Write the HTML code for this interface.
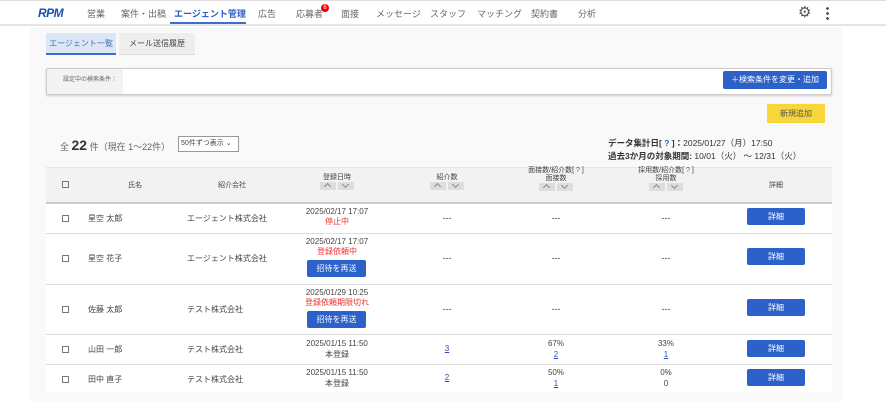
<!DOCTYPE html>
<html><head><meta charset="utf-8"><style>
*{margin:0;padding:0;box-sizing:border-box}
body{width:886px;height:402px;overflow:hidden;background:#fff;font-family:"Liberation Sans","Noto Sans CJK JP",sans-serif;color:#444;font-size:9px;position:relative;white-space:nowrap}
.a{position:absolute}
.nav{left:0;top:0;width:886px;height:26px;border-top:1px solid #ddd;border-bottom:2px solid #e4e4e4;background:#fff}
.ni{top:7px;font-size:9px;color:#666}
.wrap{left:30px;top:27px;width:812px;height:375px;background:#f9f9f9}
.btn{background:#2b61c9;color:#fff;text-align:center;border-radius:2px;font-size:8px}
.c{text-align:center}
.row{left:46px;width:786px;background:#fff;border-bottom:1px solid #ddd}
.cb{width:7px;height:7px;border:1px solid #777}
.sort{display:inline-block;width:16px;height:8px;background:#ddd;margin:0 1px;position:relative}
.sort::after{content:"";position:absolute;left:5px;top:2px;width:4px;height:4px;border-left:1px solid #888;border-top:1px solid #888;transform:rotate(45deg)}
.sort.d::after{top:0px;transform:rotate(225deg)}
.red{color:#e33}
.lk{color:#2b4fb0;text-decoration:underline}
</style></head><body>
<div class="a nav"></div>
<div class="a" style="left:38px;top:6px;font-weight:bold;font-style:italic;color:#1e4fb0;font-size:12px;letter-spacing:-0.5px">RPM</div>
<div class="a ni" style="left:87px">営業</div>
<div class="a ni" style="left:121px">案件・出稿</div>
<div class="a ni" style="left:174px;color:#2b5fc7;font-weight:bold">エージェント管理</div>
<div class="a" style="left:170px;top:22px;width:76px;height:2px;background:#3a6fd0"></div>
<div class="a ni" style="left:258px">広告</div>
<div class="a ni" style="left:296px">応募者</div>
<div class="a" style="left:321px;top:4px;width:8px;height:8px;border-radius:50%;background:#e00;color:#fff;font-size:6px;text-align:center;line-height:8px">6</div>
<div class="a ni" style="left:341px">面接</div>
<div class="a ni" style="left:376px">メッセージ</div>
<div class="a ni" style="left:430px">スタッフ</div>
<div class="a ni" style="left:477px">マッチング</div>
<div class="a ni" style="left:531px">契約書</div>
<div class="a ni" style="left:578px">分析</div>
<div class="a" style="left:798px;top:5px;font-size:15px;color:#555;line-height:15px;font-family:'DejaVu Sans',sans-serif">⚙</div>
<div class="a" style="left:826px;top:6px;width:3px;height:15px;background:radial-gradient(circle,#555 1.3px,transparent 1.5px) 0 0/3px 5px"></div>
<div class="a wrap"></div>
<div class="a" style="left:46px;top:33px;width:70px;height:22px;background:#dbe7f6;border-bottom:2px solid #3a6fd0;color:#4a6fb0;text-align:center;line-height:21px;font-size:8px">エージェント一覧</div>
<div class="a" style="left:119px;top:33px;width:76px;height:22px;background:#eee;border-bottom:1px solid #ddd;text-align:center;line-height:21px;color:#444;font-size:8px">メール送信履歴</div>
<div class="a" style="left:46px;top:68px;width:786px;height:27px;background:#fff;border:1px solid #ccc;border-radius:2px;box-shadow:0 1px 2px #ccc"></div>
<div class="a" style="left:47px;top:69px;width:76px;height:25px;background:#f3f3f3;font-size:6px;text-align:right;padding-right:6px;line-height:23px;color:#666">設定中の検索条件：</div>
<div class="a btn" style="left:723px;top:71px;width:104px;height:18px;line-height:18px">＋検索条件を変更・追加</div>
<div class="a" style="left:767px;top:104px;width:58px;height:19px;background:#f7d63a;text-align:center;line-height:19px;font-size:8px;color:#555">新規追加</div>
<div class="a" style="left:60px;top:137px;font-size:9px;color:#666">全 <b style="font-size:14px;color:#333">22</b> 件（現在 1～22件）</div>
<div class="a" style="left:178px;top:136px;width:61px;height:16px;border:1px solid #999;background:#fff;font-size:7px;line-height:14px;padding-left:2px">50件ずつ表示 ⌄</div>
<div class="a" style="left:608px;top:137px;font-size:8.5px;color:#333"><b>データ集計日[<span style="color:#2b5fc7"> ? </span>]：</b>2025/01/27（月）17:50</div>
<div class="a" style="left:608px;top:150px;font-size:8.5px;color:#333"><b>過去3か月の対象期間:</b> 10/01（火） ～ 12/31（火）</div>
<div class="a" style="left:46px;top:167px;width:786px;height:37px;background:#f2f2f2;border-bottom:2px solid #ccc;border-top:1px solid #e6e6e6"></div>
<div class="a cb" style="left:62px;top:181px"></div>
<div class="a c" style="left:110px;top:180px;width:50px;font-size:7px">氏名</div>
<div class="a c" style="left:200px;top:180px;width:64px;font-size:7px">紹介会社</div>
<div class="a c" style="left:297px;top:172px;width:80px;font-size:7px">登録日時<br><span class="sort"></span><span class="sort d"></span></div>
<div class="a c" style="left:407px;top:172px;width:80px;font-size:7px">紹介数<br><span class="sort"></span><span class="sort d"></span></div>
<div class="a c" style="left:506px;top:167px;width:100px;font-size:7px;line-height:8px">面接数/紹介数[<span style="color:#2b5fc7"> ? </span>]<br>面接数<br><span class="sort"></span><span class="sort d"></span></div>
<div class="a c" style="left:616px;top:167px;width:100px;font-size:7px;line-height:8px">採用数/紹介数[<span style="color:#2b5fc7"> ? </span>]<br>採用数<br><span class="sort"></span><span class="sort d"></span></div>
<div class="a c" style="left:756px;top:180px;width:40px;font-size:7px">詳細</div>

<div class="a row" style="top:204px;height:30px"></div>
<div class="a row" style="top:234px;height:51px"></div>
<div class="a row" style="top:285px;height:50px"></div>
<div class="a row" style="top:335px;height:30px"></div>
<div class="a row" style="top:365px;height:27px;border-bottom:none"></div>

<div class="a cb" style="left:62px;top:215px"></div><div class="a" style="left:88px;top:213px;font-size:8px">星空 太郎</div><div class="a" style="left:187px;top:213px;font-size:8px">エージェント株式会社</div>
<div class="a c" style="left:287px;top:207px;width:100px;font-size:8px;line-height:10px">2025/02/17 17:07<br><span class="red">停止中</span></div>
<div class="a c" style="left:427px;top:213px;width:40px">---</div><div class="a c" style="left:536px;top:213px;width:40px">---</div><div class="a c" style="left:646px;top:213px;width:40px">---</div>
<div class="a btn" style="left:747px;top:208px;width:58px;height:17px;line-height:17px">詳細</div>

<div class="a cb" style="left:62px;top:255px"></div><div class="a" style="left:88px;top:253px;font-size:8px">星空 花子</div><div class="a" style="left:187px;top:253px;font-size:8px">エージェント株式会社</div>
<div class="a c" style="left:287px;top:237px;width:100px;font-size:8px;line-height:10px">2025/02/17 17:07<br><span class="red">登録依頼中</span></div>
<div class="a btn" style="left:307px;top:260px;width:59px;height:17px;line-height:17px">招待を再送</div>
<div class="a c" style="left:427px;top:253px;width:40px">---</div><div class="a c" style="left:536px;top:253px;width:40px">---</div><div class="a c" style="left:646px;top:253px;width:40px">---</div>
<div class="a btn" style="left:747px;top:248px;width:58px;height:17px;line-height:17px">詳細</div>

<div class="a cb" style="left:62px;top:306px"></div><div class="a" style="left:88px;top:304px;font-size:8px">佐藤 太郎</div><div class="a" style="left:187px;top:304px;font-size:8px">テスト株式会社</div>
<div class="a c" style="left:287px;top:288px;width:100px;font-size:8px;line-height:10px">2025/01/29 10:25<br><span class="red">登録依頼期限切れ</span></div>
<div class="a btn" style="left:307px;top:311px;width:59px;height:17px;line-height:17px">招待を再送</div>
<div class="a c" style="left:427px;top:304px;width:40px">---</div><div class="a c" style="left:536px;top:304px;width:40px">---</div><div class="a c" style="left:646px;top:304px;width:40px">---</div>
<div class="a btn" style="left:747px;top:299px;width:58px;height:17px;line-height:17px">詳細</div>

<div class="a cb" style="left:62px;top:346px"></div><div class="a" style="left:88px;top:344px;font-size:8px">山田 一郎</div><div class="a" style="left:187px;top:344px;font-size:8px">テスト株式会社</div>
<div class="a c" style="left:287px;top:338px;width:100px;font-size:8px;line-height:11px">2025/01/15 11:50<br>本登録</div>
<div class="a c lk" style="left:427px;top:344px;width:40px;font-size:8px">3</div>
<div class="a c" style="left:526px;top:338px;width:60px;font-size:8px;line-height:11px">67%<br><span class="lk">2</span></div>
<div class="a c" style="left:636px;top:338px;width:60px;font-size:8px;line-height:11px">33%<br><span class="lk">1</span></div>
<div class="a btn" style="left:747px;top:340px;width:58px;height:17px;line-height:17px">詳細</div>

<div class="a cb" style="left:62px;top:376px"></div><div class="a" style="left:88px;top:374px;font-size:8px">田中 直子</div><div class="a" style="left:187px;top:374px;font-size:8px">テスト株式会社</div>
<div class="a c" style="left:287px;top:367px;width:100px;font-size:8px;line-height:11px">2025/01/15 11:50<br>本登録</div>
<div class="a c lk" style="left:427px;top:373px;width:40px;font-size:8px">2</div>
<div class="a c" style="left:526px;top:367px;width:60px;font-size:8px;line-height:11px">50%<br><span class="lk">1</span></div>
<div class="a c" style="left:636px;top:367px;width:60px;font-size:8px;line-height:11px">0%<br>0</div>
<div class="a btn" style="left:747px;top:369px;width:58px;height:17px;line-height:17px">詳細</div>
</body></html>
